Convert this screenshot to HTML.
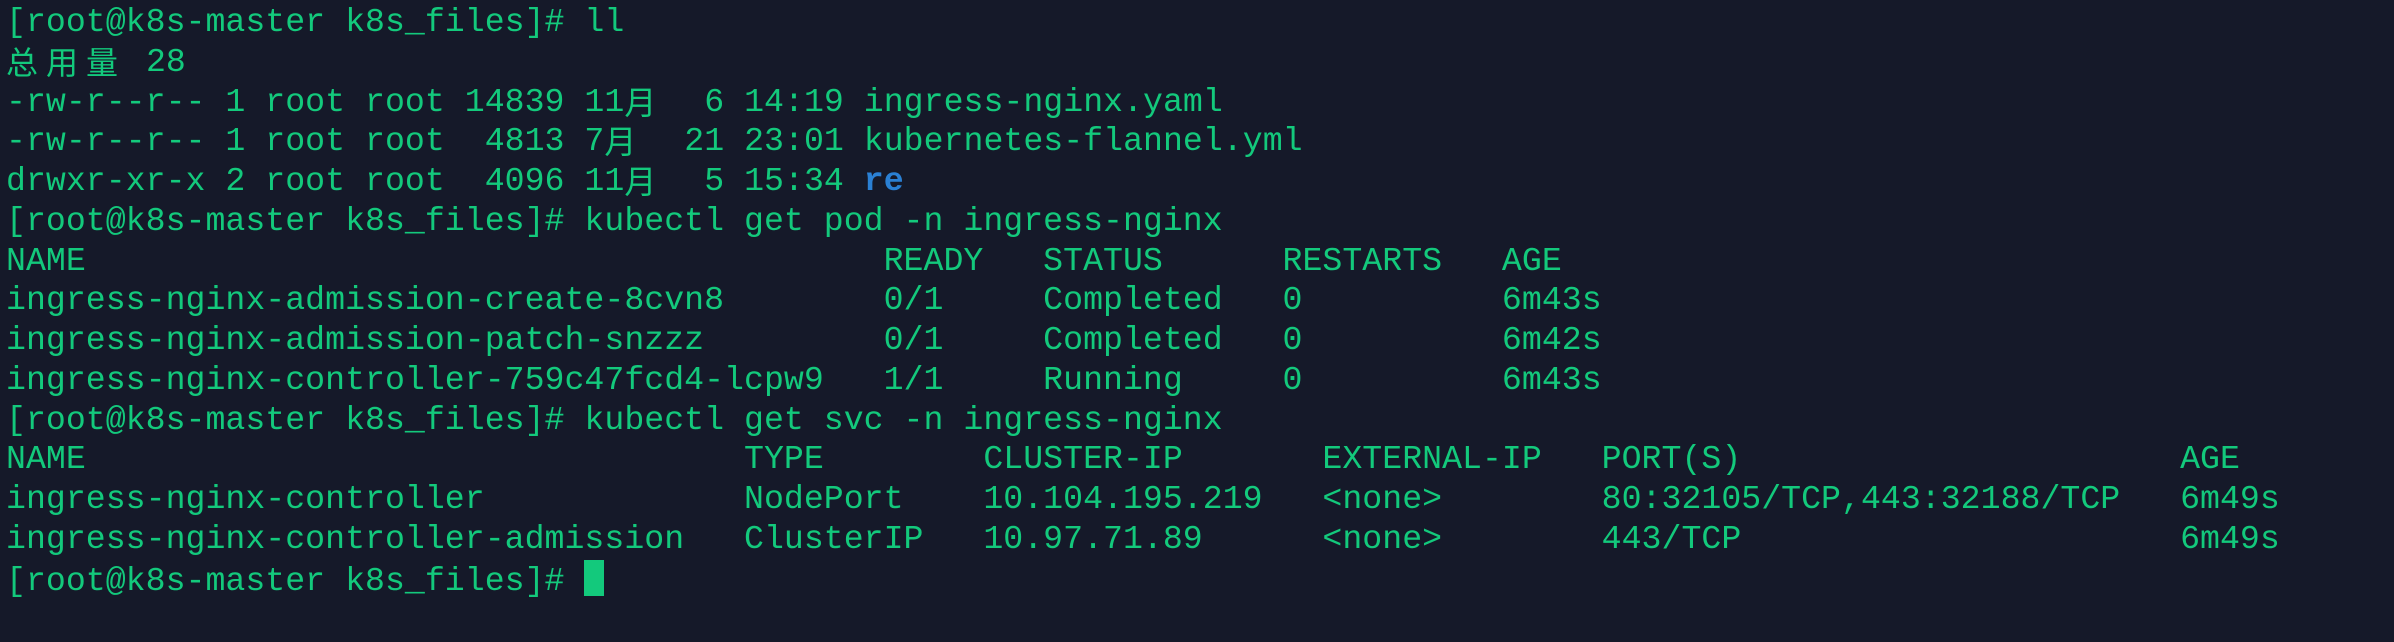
<!DOCTYPE html>
<html><head><meta charset="utf-8"><style>
html,body{margin:0;padding:0;background:#151929;width:2394px;height:642px;overflow:hidden}
pre{margin:0;position:absolute;left:6px;top:3px;font-family:"Liberation Mono","Noto Sans CJK SC",monospace;font-size:33.2px;line-height:39.75px;color:#13c97c;letter-spacing:0.03px}
.c{display:inline-block;width:40px;height:30px;line-height:30px;overflow:visible;font-family:"Noto Sans CJK SC",sans-serif;font-size:32px;vertical-align:-3px}
.b{color:#2a80d4;font-weight:bold}
.cur{display:inline-block;width:20px;height:36px;background:#13c97c;vertical-align:-6px}
</style></head><body><pre>[root@k8s-master k8s_files]# ll
<span class="c">总</span><span class="c">用</span><span class="c">量</span> 28
-rw-r--r-- 1 root root 14839 11<span class="c">月</span>  6 14:19 ingress-nginx.yaml
-rw-r--r-- 1 root root  4813 7<span class="c">月</span>  21 23:01 kubernetes-flannel.yml
drwxr-xr-x 2 root root  4096 11<span class="c">月</span>  5 15:34 <span class="b">re</span>
[root@k8s-master k8s_files]# kubectl get pod -n ingress-nginx
NAME                                        READY   STATUS      RESTARTS   AGE
ingress-nginx-admission-create-8cvn8        0/1     Completed   0          6m43s
ingress-nginx-admission-patch-snzzz         0/1     Completed   0          6m42s
ingress-nginx-controller-759c47fcd4-lcpw9   1/1     Running     0          6m43s
[root@k8s-master k8s_files]# kubectl get svc -n ingress-nginx
NAME                                 TYPE        CLUSTER-IP       EXTERNAL-IP   PORT(S)                      AGE
ingress-nginx-controller             NodePort    10.104.195.219   &lt;none&gt;        80:32105/TCP,443:32188/TCP   6m49s
ingress-nginx-controller-admission   ClusterIP   10.97.71.89      &lt;none&gt;        443/TCP                      6m49s
[root@k8s-master k8s_files]# <span class="cur"></span></pre></body></html>
